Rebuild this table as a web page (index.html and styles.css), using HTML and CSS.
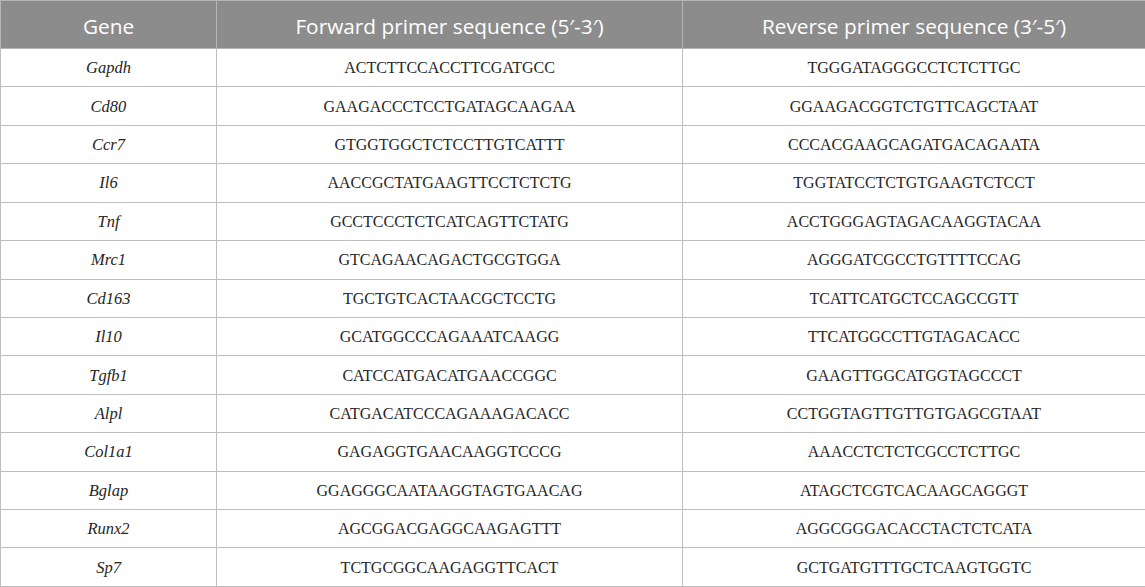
FILE: index.html
```html
<!DOCTYPE html>
<html>
<head>
<meta charset="utf-8">
<link rel="stylesheet" href="styles.css">
</head>
<body>
<table class="primers">
  <colgroup>
    <col class="c-gene">
    <col class="c-fwd">
    <col class="c-rev">
  </colgroup>
  <thead>
    <tr><th>Gene</th><th>Forward primer sequence (5′-3′)</th><th>Reverse primer sequence (3′-5′)</th></tr>
  </thead>
  <tbody>
    <tr><td class="gene">Gapdh</td><td>ACTCTTCCACCTTCGATGCC</td><td>TGGGATAGGGCCTCTCTTGC</td></tr>
    <tr><td class="gene">Cd80</td><td>GAAGACCCTCCTGATAGCAAGAA</td><td>GGAAGACGGTCTGTTCAGCTAAT</td></tr>
    <tr><td class="gene">Ccr7</td><td>GTGGTGGCTCTCCTTGTCATTT</td><td>CCCACGAAGCAGATGACAGAATA</td></tr>
    <tr><td class="gene">Il6</td><td>AACCGCTATGAAGTTCCTCTCTG</td><td>TGGTATCCTCTGTGAAGTCTCCT</td></tr>
    <tr><td class="gene">Tnf</td><td>GCCTCCCTCTCATCAGTTCTATG</td><td>ACCTGGGAGTAGACAAGGTACAA</td></tr>
    <tr><td class="gene">Mrc1</td><td>GTCAGAACAGACTGCGTGGA</td><td>AGGGATCGCCTGTTTTCCAG</td></tr>
    <tr><td class="gene">Cd163</td><td>TGCTGTCACTAACGCTCCTG</td><td>TCATTCATGCTCCAGCCGTT</td></tr>
    <tr><td class="gene">Il10</td><td>GCATGGCCCAGAAATCAAGG</td><td>TTCATGGCCTTGTAGACACC</td></tr>
    <tr><td class="gene">Tgfb1</td><td>CATCCATGACATGAACCGGC</td><td>GAAGTTGGCATGGTAGCCCT</td></tr>
    <tr><td class="gene">Alpl</td><td>CATGACATCCCAGAAAGACACC</td><td>CCTGGTAGTTGTTGTGAGCGTAAT</td></tr>
    <tr><td class="gene">Col1a1</td><td>GAGAGGTGAACAAGGTCCCG</td><td>AAACCTCTCTCGCCTCTTGC</td></tr>
    <tr><td class="gene">Bglap</td><td>GGAGGGCAATAAGGTAGTGAACAG</td><td>ATAGCTCGTCACAAGCAGGGT</td></tr>
    <tr><td class="gene">Runx2</td><td>AGCGGACGAGGCAAGAGTTT</td><td>AGGCGGGACACCTACTCTCATA</td></tr>
    <tr><td class="gene">Sp7</td><td>TCTGCGGCAAGAGGTTCACT</td><td>GCTGATGTTTGCTCAAGTGGTC</td></tr>
  </tbody>
</table>
</body>
</html>
```
FILE: styles.css
```css
html, body {
  margin: 0;
  padding: 0;
  background: #ffffff;
}

.primers {
  width: 1145px;
  border-collapse: collapse;
  table-layout: fixed;
  font-family: "Liberation Serif", "Times New Roman", serif;
  color: #262626;
}

.c-gene { width: 216px; }
.c-fwd { width: 466px; }
.c-rev { width: 463px; }

.primers th,
.primers td {
  border: 1px solid #bfbfbf;
  text-align: center;
  vertical-align: middle;
  padding: 0;
}

.primers th {
  height: 48px;
  line-height: 24px;
  padding-top: 2px;
  box-sizing: border-box;
  background: #8c8c8c;
  color: #ffffff;
  font-family: "Open Sans", "Noto Sans", sans-serif;
  font-weight: 400;
  font-size: 20.8px;
  border-color: #b5b5b5;
}

.primers td {
  height: 38.43px;
  line-height: 18px;
  padding-top: 1px;
  box-sizing: border-box;
  font-size: 16px;
}

.primers td.gene {
  font-style: italic;
  font-size: 16.5px;
}
```
